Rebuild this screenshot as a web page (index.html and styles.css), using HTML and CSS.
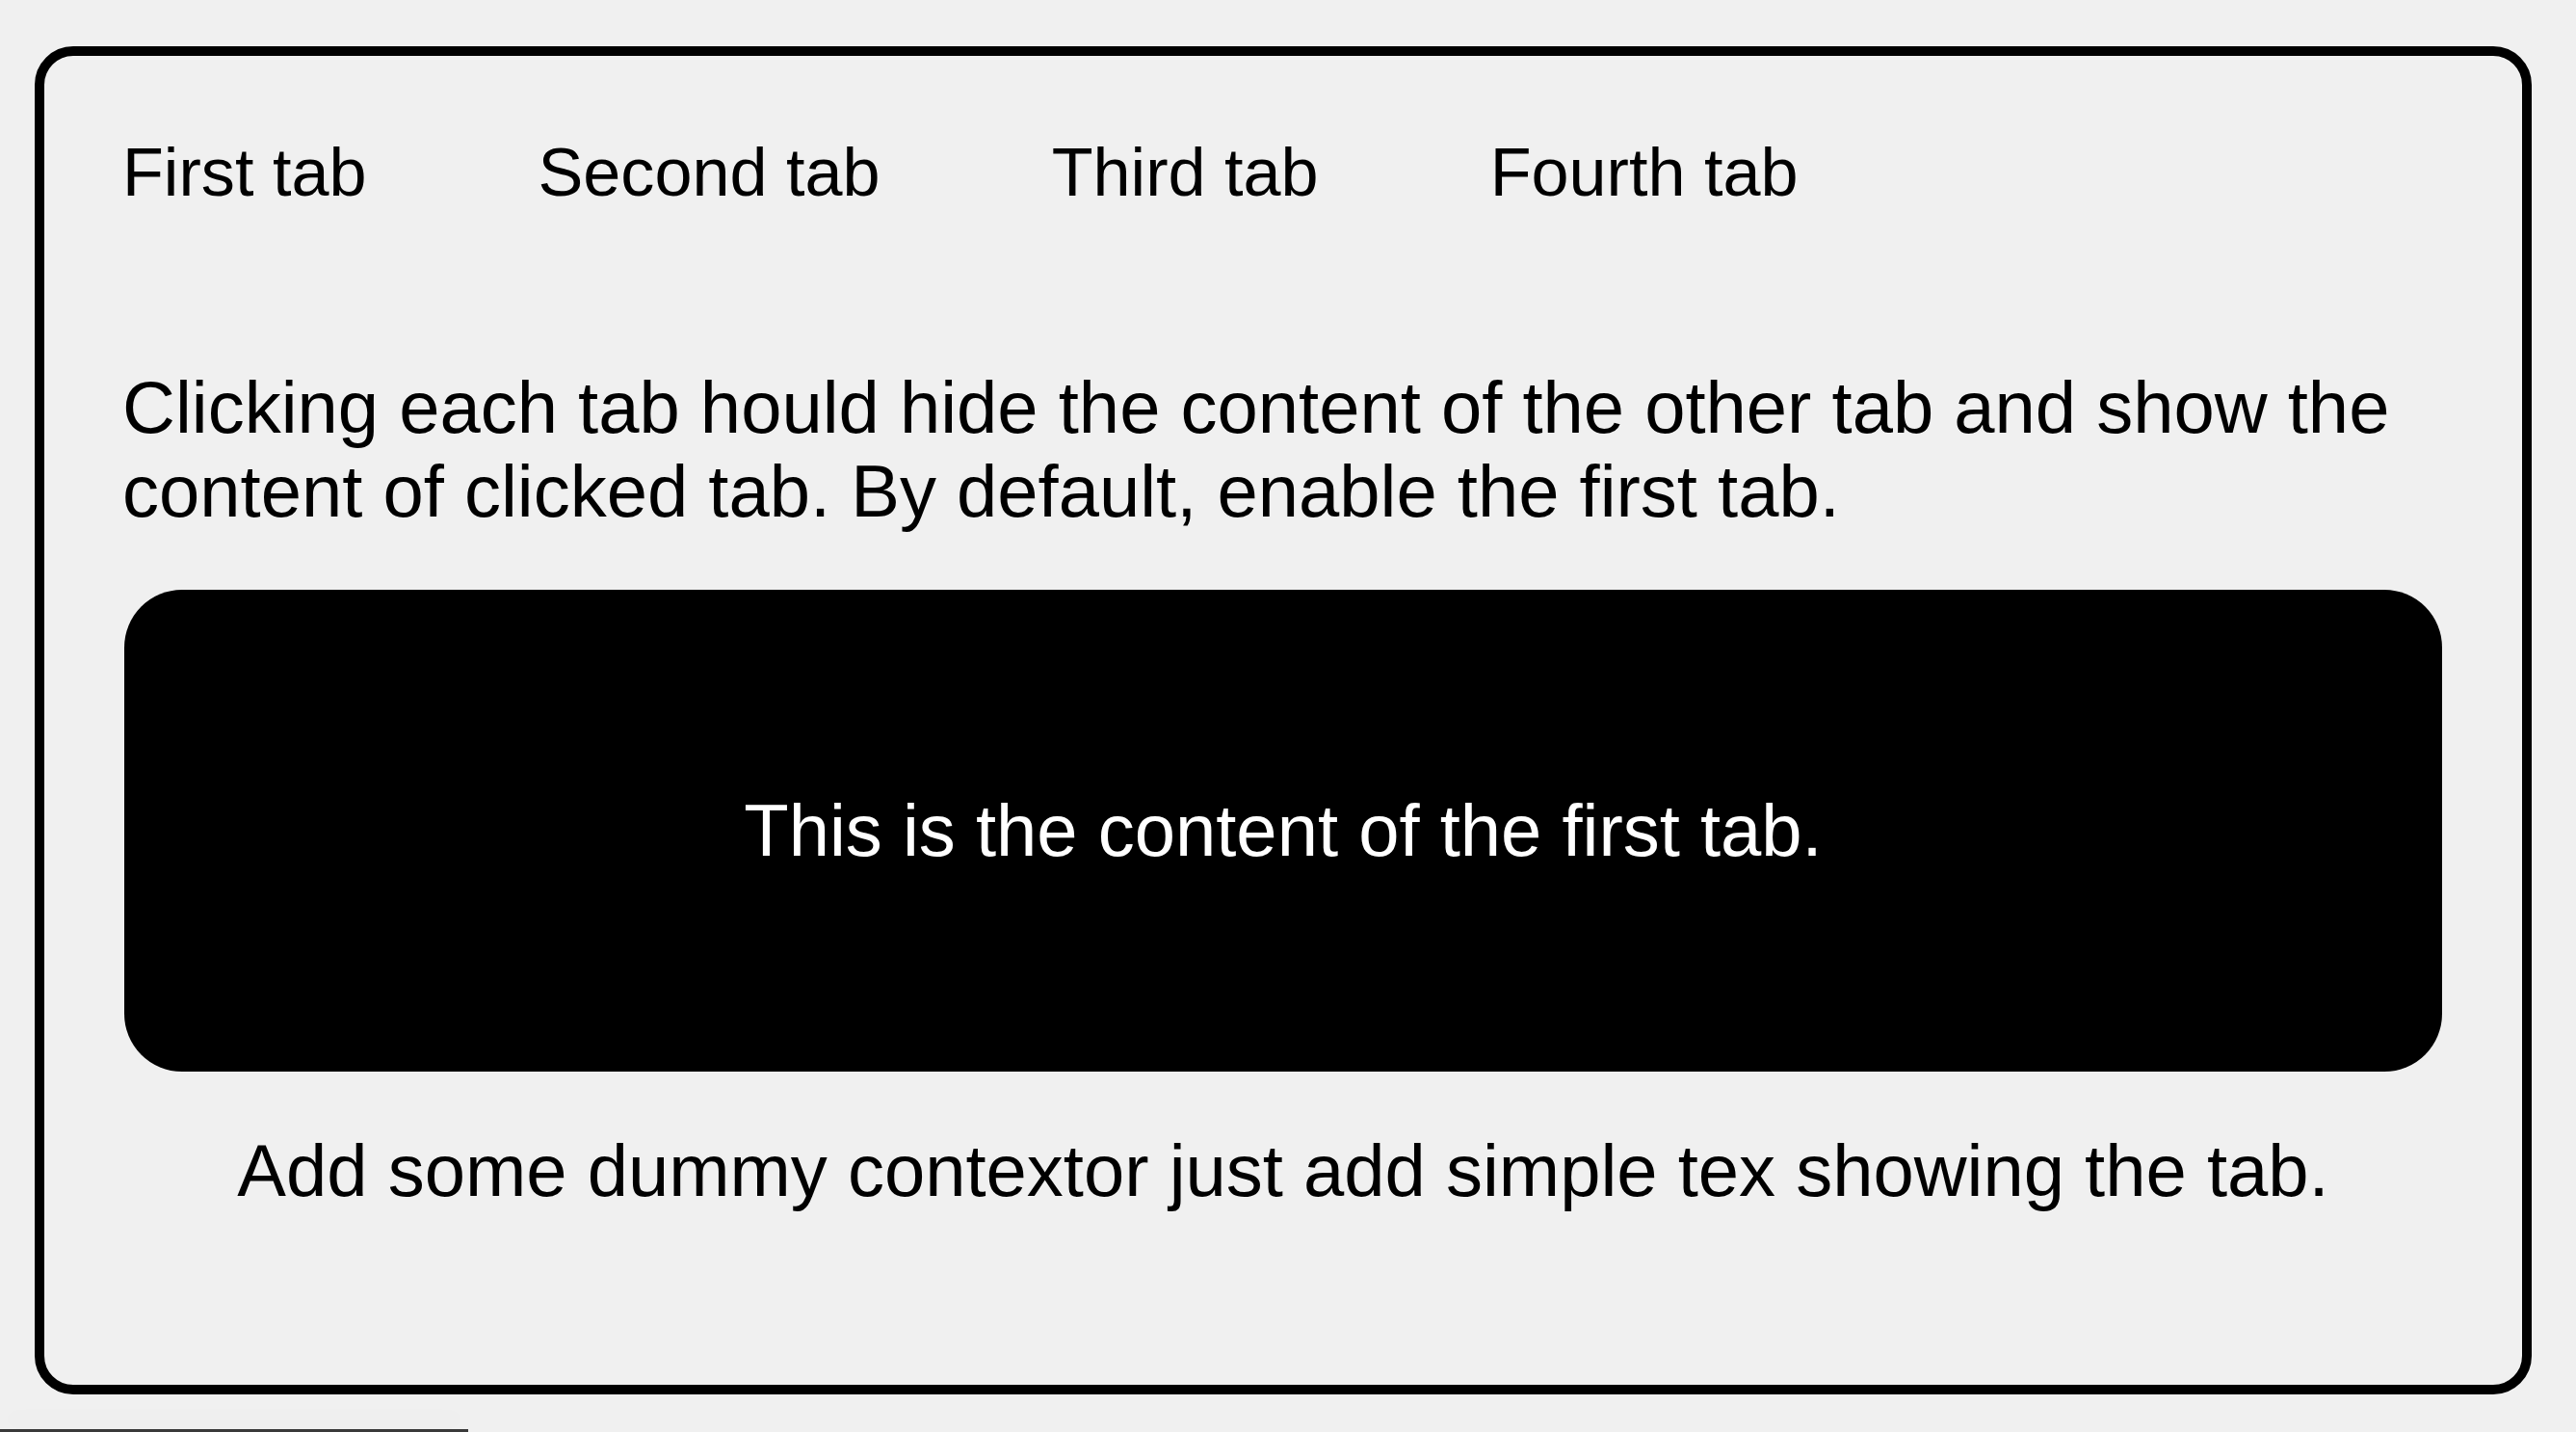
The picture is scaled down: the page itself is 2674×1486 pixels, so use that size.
FILE: index.html
```html
<!DOCTYPE html>
<html lang="en">
<head>
<meta charset="utf-8">
<title>Tabs</title>
<link rel="stylesheet" href="styles.css">
</head>
<body>
  <div class="frame">
    <nav class="tabs">
      <span class="tab">First tab</span>
      <span class="tab">Second tab</span>
      <span class="tab">Third tab</span>
      <span class="tab">Fourth tab</span>
    </nav>
    <p class="intro">Clicking each tab hould hide the content of the other tab and show the content of clicked tab. By default, enable the first tab.</p>
    <div class="panel">This is the content of the first tab.</div>
    <p class="note">Add some dummy contextor just add simple tex showing the tab.</p>
  </div>
  <div class="scrollbar"></div>
</body>
</html>
```

FILE: styles.css
```css
html, body {
  margin: 0;
  padding: 0;
  background: #f0f0f0;
}

body {
  padding: 48px 46px 0 36px;
  font-family: "Liberation Sans", Arial, Helvetica, sans-serif;
  color: #000;
  overflow: hidden;
}

.frame {
  box-sizing: border-box;
  width: 2592px;
  border: 10px solid #000;
  border-radius: 40px;
  padding: 81px 78px 178px 81px;
}

.tabs {
  display: flex;
  gap: 178px;
  font-size: 70.2px;
  line-height: 80px;
}

.tab {
  white-space: nowrap;
}

.intro {
  margin: 161px 0 0 0;
  font-size: 76px;
  line-height: 86.7px;
}

.panel {
  margin: 59px 5px 0 2px;
  height: 500px;
  border-radius: 60px;
  background: #000;
  color: #fff;
  font-size: 76px;
  line-height: 86.7px;
  display: flex;
  align-items: center;
  justify-content: center;
}

.note {
  margin: 60px 5px 0 2px;
  font-size: 76px;
  line-height: 86.7px;
  text-align: center;
}

.scrollbar {
  position: fixed;
  left: 0;
  bottom: 0;
  width: 486px;
  height: 3px;
  background: #3a3a3a;
  box-shadow: 0 -12px 24px rgba(0, 0, 0, 0.05);
}
```
